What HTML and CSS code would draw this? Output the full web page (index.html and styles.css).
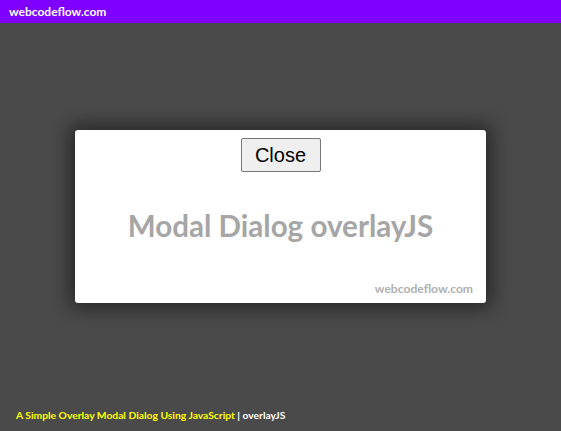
FILE: index.html
```html
<!DOCTYPE html>
<html>
<head>
<meta charset="utf-8">
<link rel="stylesheet" href="styles.css">
</head>
<body>
<div class="page">
  <header class="topbar">webcodeflow.com</header>
  <main class="stage"></main>
  <footer class="foot"><span class="hl">A Simple Overlay Modal Dialog Using JavaScript</span> | overlayJS</footer>
</div>
<div class="modal">
  <button class="close">Close</button>
  <h1 class="title">Modal Dialog overlayJS</h1>
  <div class="credit">webcodeflow.com</div>
</div>
</body>
</html>
```

FILE: styles.css
```css
html, body { margin: 0; padding: 0; height: 100%; }
body { background: #4a4a4a; font-family: "Lato", "Open Sans", sans-serif; }
.page { display: flex; flex-direction: column; height: 100%; }
.topbar {
  background: #8000ff; color: #fff; font-weight: 700; font-size: 12px;
  height: 23px; line-height: 23px; padding-left: 9px;
  font-family: "Lato", sans-serif;
}
.stage { flex: 1; }
.foot {
  color: #fff; font-size: 10.3px; font-weight: 700; padding: 0 0 10px 16px;
  font-family: "Lato", sans-serif;
}
.hl { color: #ffff00; }
.modal {
  position: absolute; left: 75px; top: 130px; width: 411px; height: 173px;
  background: #fff; border-radius: 3px;
  box-shadow: 0 0 18px 6px rgba(0,0,0,0.45);
  display: flex; flex-direction: column; align-items: center;
  box-sizing: border-box; padding-top: 8px;
}
.close {
  font-family: "Liberation Sans", Arial, sans-serif; font-size: 20px;
  padding: 1px 12px; height: 34px; width: 80px; margin: 0;
  background: #efefef; border: 1px solid #767676; border-radius: 2px; color: #000;
}
.title {
  margin: 38px 0 0; font-family: "Lato", sans-serif; font-weight: 700;
  font-size: 29.6px; color: #a6a6a6; line-height: 32px;
}
.credit {
  align-self: flex-end; margin: auto 13px 7px 0;
  font-family: "Lato", sans-serif; font-weight: 700; font-size: 12.1px; color: #b0b0b0;
}
```
